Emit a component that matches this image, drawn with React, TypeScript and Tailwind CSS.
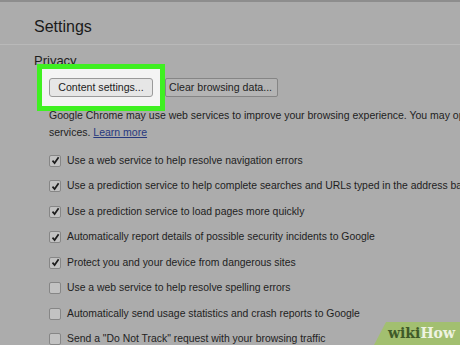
import React from 'react';

const rows: { label: string; checked: boolean }[] = [
  { label: 'Use a web service to help resolve navigation errors', checked: true },
  { label: 'Use a prediction service to help complete searches and URLs typed in the address bar', checked: true },
  { label: 'Use a prediction service to load pages more quickly', checked: true },
  { label: 'Automatically report details of possible security incidents to Google', checked: true },
  { label: 'Protect you and your device from dangerous sites', checked: true },
  { label: 'Use a web service to help resolve spelling errors', checked: false },
  { label: 'Automatically send usage statistics and crash reports to Google', checked: false },
  { label: 'Send a "Do Not Track" request with your browsing traffic', checked: false },
];

const Checkbox: React.FC<{ checked: boolean }> = ({ checked }) => (
  <div className="w-[12px] h-[12px] shrink-0 rounded-[2px] border border-[#868686] bg-[#c2c2c2] flex items-center justify-center">
    {checked && (
      <svg width="9" height="9" viewBox="0 0 9 9">
        <path d="M1.5 4.6 L3.6 7 L7.6 1.2" fill="none" stroke="#1c1c1c" strokeWidth="1.7" />
      </svg>
    )}
  </div>
);

export default function App() {
  return (
    <div className="w-[460px] h-[345px] overflow-hidden relative bg-[#acacac] text-[#1e1e1e] font-['Liberation_Sans',Arial,sans-serif]">
      <div className="h-[2px] bg-[#8d8d8d]" />
      <div className="h-[43px] pl-[34px] pt-[15px] border-b border-[#b9b9b9]">
        <h1 className="text-[16px] leading-[20px] text-[#1a1a1a]">Settings</h1>
      </div>

      <div className="pl-[34px] pt-[9px]">
        <h2 className="text-[13px] leading-[14px]">Privacy</h2>

        <div className="relative z-10 flex items-center -mt-[4px] -mb-[4px] ml-[3px]">
          <div className="w-[128px] h-[47px] border-[5px] border-[#3ff021] bg-[#f4f4f4] flex items-center pl-[7px]">
            <button className="w-[104px] h-[19px] rounded-[3px] border border-[#9a9a9a] bg-[#e6e6e6] text-[10.6px] leading-none text-[#222]">
              Content settings...
            </button>
          </div>
          <button className="w-[113px] h-[19px] rounded-[2px] border border-[#858585] bg-[#b4b4b4] text-[10.6px] leading-none text-[#222] text-left pl-[3px]">
            Clear browsing data...
          </button>
        </div>

        <div className="pl-[15px] text-[10.5px] leading-[17px] whitespace-nowrap">
          <p>Google Chrome may use web services to improve your browsing experience. You may optionally disable these</p>
          <p>
            services. <span className="text-[#27397e] underline">Learn more</span>
          </p>
        </div>

        <ul className="pl-[15px] pt-[7px]">
          {rows.map((r, i) => (
            <li key={i} className="h-[25.5px] flex items-center gap-[6px] text-[10.4px] whitespace-nowrap">
              <Checkbox checked={r.checked} />
              <span>{r.label}</span>
            </li>
          ))}
        </ul>
      </div>

      <div className="absolute right-0 bottom-0 w-[86px] h-[23px] bg-[#a2bf70] [clip-path:polygon(12px_0,100%_0,100%_100%,0_100%)] flex items-center justify-end pr-[5px] font-['DejaVu_Serif',serif] font-bold text-[14px]">
        <span className="text-[#3f5a28]">wiki</span>
        <span className="text-[#eef3e2]">How</span>
      </div>
    </div>
  );
}
